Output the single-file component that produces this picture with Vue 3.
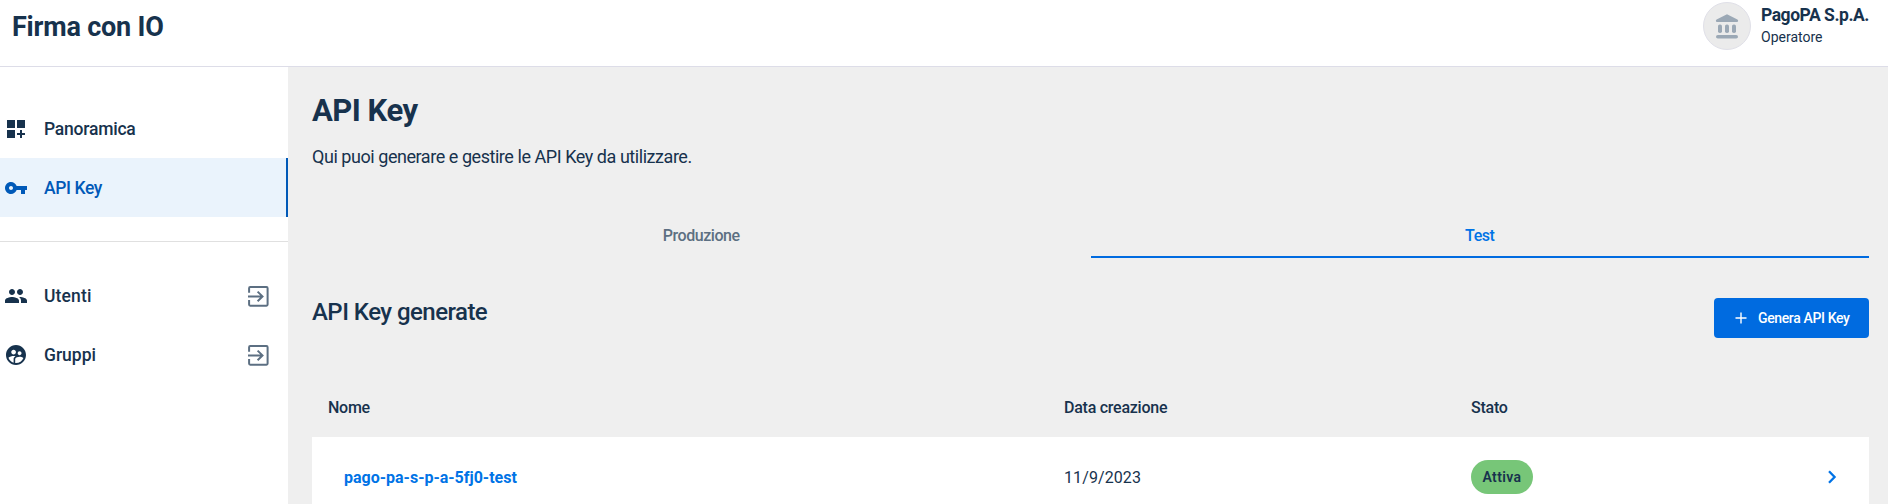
<script setup>
const mainNav = [
  { label: 'Panoramica', cls: 'tight', path: 'M3 3h8v8H3zm10 0h8v8h-8zM3 13h8v8H3zm15 0h-2v3h-3v2h3v3h2v-3h3v-2h-3z' },
  { label: 'API Key', cls: 'tighter', active: true, path: 'M12.65 10C11.83 7.67 9.61 6 7 6c-3.31 0-6 2.69-6 6s2.69 6 6 6c2.61 0 4.83-1.67 5.65-4H17v4h4v-4h2v-4H12.65zM7 14c-1.1 0-2-.9-2-2s.9-2 2-2 2 .9 2 2-.9 2-2 2z' },
]
const extNav = [
  { label: 'Utenti', cls: 'loose', path: 'M16 11c1.66 0 2.99-1.34 2.99-3S17.66 5 16 5c-1.66 0-3 1.34-3 3s1.34 3 3 3zm-8 0c1.66 0 2.99-1.34 2.99-3S9.66 5 8 5C6.34 5 5 6.34 5 8s1.34 3 3 3zm0 2c-2.33 0-7 1.17-7 3.5V19h14v-2.5c0-2.33-4.67-3.5-7-3.5zm8 0c-.29 0-.62.02-.97.05 1.16.84 1.97 1.97 1.97 3.45V19h6v-2.5c0-2.33-4.67-3.5-7-3.5z' },
  { label: 'Gruppi', cls: '', path: 'M11.99 2c-5.52 0-10 4.48-10 10s4.48 10 10 10 10-4.48 10-10-4.48-10-10-10zm3.61 6.34c1.07 0 1.93.86 1.93 1.93 0 1.07-.86 1.93-1.93 1.93-1.07 0-1.93-.86-1.93-1.93-.01-1.07.86-1.93 1.93-1.93zm-6-1.58c1.3 0 2.36 1.06 2.36 2.36 0 1.3-1.06 2.36-2.36 2.36s-2.36-1.06-2.36-2.36c0-1.31 1.05-2.36 2.36-2.36zm0 9.13v3.75c-2.4-.75-4.3-2.6-5.14-4.96 1.05-1.12 3.67-1.69 5.14-1.69.53 0 1.2.08 1.9.22-1.64.87-1.9 2.02-1.9 2.68zM11.99 20c-.27 0-.53-.01-.79-.04v-4.07c0-1.42 2.94-2.13 4.4-2.13 1.07 0 2.92.39 3.84 1.15-1.17 2.97-4.06 5.09-7.45 5.09z' },
]
const rows = [{ name: 'pago-pa-s-p-a-5fj0-test', created: '11/9/2023', status: 'Attiva' }]
</script>

<template>
  <div class="page">
    <header class="header">
      <div class="product">Firma con IO</div>
      <div class="party">
        <div class="avatar">
          <svg width="24" height="26" viewBox="0 0 24 26">
            <path d="M12 1.3 22.4 6.4Q23.3 7 23.1 8.1 23 9 22 9H2Q1 9 .9 8.1.7 7 1.6 6.4Z" />
            <rect x="3" y="11.5" width="4" height="8.6" rx="1.8" />
            <rect x="10" y="11.5" width="4" height="8.6" rx="1.8" />
            <rect x="17" y="11.5" width="4" height="8.6" rx="1.8" />
            <rect x="1" y="22" width="22" height="3.6" rx="1.8" />
          </svg>
        </div>
        <div class="party-text">
          <div class="party-name">PagoPA S.p.A.</div>
          <div class="party-role">Operatore</div>
        </div>
      </div>
    </header>
    <div class="body">
      <nav class="sidebar">
        <div v-for="i in mainNav" :key="i.label" class="item" :class="{ active: i.active }">
          <svg class="icon" width="24" height="24" viewBox="0 0 24 24"><path :d="i.path" /></svg>
          <span class="label" :class="i.cls">{{ i.label }}</span>
        </div>
        <div class="divider"></div>
        <div v-for="i in extNav" :key="i.label" class="item">
          <svg class="icon" width="24" height="24" viewBox="0 0 24 24"><path :d="i.path" /></svg>
          <span class="label" :class="i.cls">{{ i.label }}</span>
          <svg class="exit" width="21" height="21" viewBox="0 0 21 21">
            <path d="M1.1 6.8V2.2Q1.1 1.1 2.2 1.1H18.5Q19.6 1.1 19.6 2.2V18.6Q19.6 19.7 18.5 19.7H2.2Q1.1 19.7 1.1 18.6V14M0 10.4H14.4M9.6 5.6 14.5 10.4 9.6 15.2" />
          </svg>
        </div>
      </nav>
      <main class="main">
        <h1>API Key</h1>
        <p class="subtitle">Qui puoi generare e gestire le API Key da utilizzare.</p>
        <div class="tabs">
          <div class="tab"><span>Produzione</span></div>
          <div class="tab selected"><span>Test</span></div>
        </div>
        <div class="section">
          <h2>API Key generate</h2>
          <button class="button">
            <svg width="12" height="12" viewBox="0 0 12 12"><path d="M6 .5v11M.5 6h11" /></svg>
            <span>Genera API Key</span>
          </button>
        </div>
        <div class="grid head">
          <div>Nome</div>
          <div>Data creazione</div>
          <div>Stato</div>
        </div>
        <div v-for="r in rows" :key="r.name" class="grid row">
          <div class="name">{{ r.name }}</div>
          <div class="date">{{ r.created }}</div>
          <div><span class="chip">{{ r.status }}</span></div>
          <svg class="chevron" width="10" height="14" viewBox="0 0 10 14"><path d="M2 1.2 7.6 7 2 12.8" /></svg>
        </div>
      </main>
    </div>
  </div>
</template>

<style>
html, body { margin: 0; overflow: hidden; }
</style>

<style scoped>
.page { height: 504px; overflow: hidden; display: flex; flex-direction: column; background: #fff; color: #17324d; font-family: Roboto, "Liberation Sans", sans-serif; white-space: nowrap; box-sizing: border-box; }
.page * { box-sizing: border-box; }
.header { height: 67px; flex: none; border-bottom: 1px solid #dddde8; display: flex; justify-content: space-between; padding: 0 19px 0 12px; }
.product { font-size: 27px; font-weight: 700; line-height: 54px; letter-spacing: -0.2px; }
.party { display: flex; padding-top: 2px; width: 166px; }
.avatar { width: 48px; height: 48px; border-radius: 50%; background: #ebebeb; border: 1px solid #e0e0e8; display: flex; align-items: center; justify-content: center; fill: #9ba8b5; flex: none; }
.party-text { margin-left: 10px; }
.party-name { font-size: 17.5px; font-weight: 700; line-height: 27px; letter-spacing: -0.47px; }
.party-role { font-size: 14px; line-height: 17px; }
.body { flex: 1; display: flex; min-height: 0; }
.sidebar { width: 288px; flex: none; padding-top: 32px; background: #fff; }
.item { height: 59px; display: flex; align-items: center; padding: 1px 19px 0 4px; }
.item.active { background: #eaf3fc; border-right: 2px solid #0059b8; color: #0059b8; padding-right: 17px; }
.icon { fill: currentColor; flex: none; }
.label { margin-left: 16px; font-size: 17.5px; font-weight: 500; }
.label.tight { letter-spacing: -0.22px; }
.label.tighter { letter-spacing: -0.4px; }
.label.loose { letter-spacing: 0.15px; }
.exit { margin-left: auto; fill: none; stroke: #5c6f82; stroke-width: 2; }
.divider { height: 1px; background: #e0e0e0; margin: 24px 0; }
.main { flex: 1; background: #efefef; padding: 23px 19px 0 24px; min-width: 0; }
h1 { margin: 0; font-size: 31px; font-weight: 700; line-height: 42px; letter-spacing: -0.5px; }
.subtitle { margin: 12px 0 0; font-size: 18px; line-height: 26px; letter-spacing: -0.45px; }
.tabs { display: flex; margin-top: 40px; height: 48px; }
.tab { flex: 1; display: flex; align-items: center; justify-content: center; font-size: 16px; font-weight: 500; letter-spacing: -0.45px; color: #5c6f82; border-bottom: 2px solid transparent; padding-top: 4px; }
.tab.selected { color: #0073e6; border-color: #006be0; }
.section { display: flex; justify-content: space-between; margin-top: 40px; height: 40px; }
h2 { margin: 0; font-size: 24px; font-weight: 500; line-height: 28px; letter-spacing: -0.54px; }
.button { width: 155px; height: 40px; border: 0; border-radius: 4px; background: #006be0; color: #fff; font: 500 14px Roboto, sans-serif; letter-spacing: -0.37px; display: flex; align-items: center; padding: 0 0 0 21px; gap: 11px; }
.button svg { stroke: #fff; stroke-width: 1.4; }
.grid { display: grid; grid-template-columns: 736px 407px 1fr 10px; align-items: center; }
.head { margin-top: 66px; height: 33px; padding: 0 16px; align-items: start; font-size: 16px; font-weight: 500; line-height: 8px; letter-spacing: -0.25px; }
.row { background: #fff; height: 80px; padding: 0 32px 0 16px; font-size: 16px; }
.name { padding-left: 16px; color: #0073e6; font-weight: 700; }
.date { letter-spacing: 0.1px; }
.chip { display: inline-flex; align-items: center; justify-content: center; width: 62px; height: 34px; border-radius: 17px; background: #77c678; font-size: 14px; font-weight: 600; letter-spacing: 0.4px; }
.chevron { fill: none; stroke: #0073e6; stroke-width: 2.3; }
</style>
